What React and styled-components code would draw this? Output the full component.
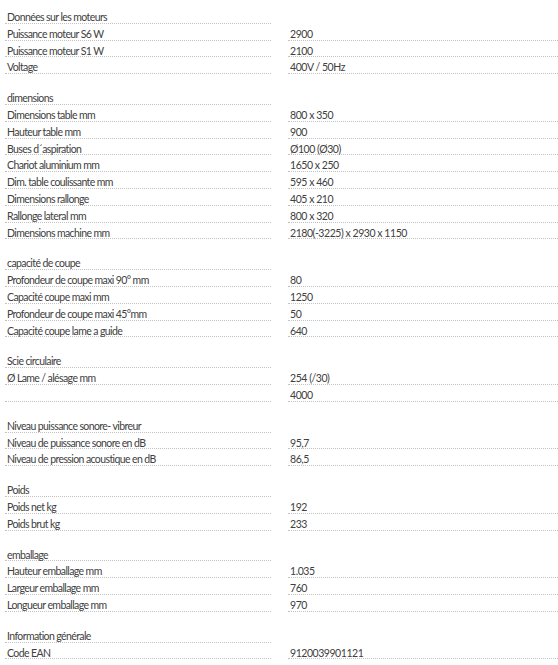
import React from "react";
import styled, { createGlobalStyle } from "styled-components";

const GlobalStyle = createGlobalStyle`
  html, body {
    margin: 0;
    padding: 0;
    background: #ffffff;
    overflow: hidden;
  }
`;

const Page = styled.div`
  width: 558px;
  padding: 7px 0 0 5px;
  box-sizing: border-box;
  font-family: "Lato", "Liberation Sans", sans-serif;
  font-size: 10.5px;
  letter-spacing: -0.45px;
  color: #404040;
`;

const Section = styled.div`
  & + & {
    margin-top: 14px;
  }
`;

const Row = styled.div`
  display: grid;
  grid-template-columns: 266px 270px;
  column-gap: 17px;
`;

const Cell = styled.div`
  box-sizing: border-box;
  height: 16.8px;
  padding: 5px 0 0 2px;
  line-height: 10px;
  white-space: nowrap;
  letter-spacing: ${(p) => (p.$label ? "-0.6px" : "inherit")};
  border-bottom: ${(p) => (p.$blank ? "none" : "1px dotted #c2c2c2")};
`;

const sections = [
  {
    title: "Données sur les moteurs",
    rows: [
      ["Puissance moteur S6 W", "2900"],
      ["Puissance moteur S1 W", "2100"],
      ["Voltage", "400V / 50Hz"],
    ],
  },
  {
    title: "dimensions",
    rows: [
      ["Dimensions table mm", "800 x 350"],
      ["Hauteur table mm", "900"],
      ["Buses d´aspiration", "Ø100 (Ø30)"],
      ["Chariot aluminium mm", "1650 x 250"],
      ["Dim. table coulissante mm", "595 x 460"],
      ["Dimensions rallonge", "405 x 210"],
      ["Rallonge lateral mm", "800 x 320"],
      ["Dimensions machine mm", "2180(-3225) x 2930 x 1150"],
    ],
  },
  {
    title: "capacité de coupe",
    rows: [
      ["Profondeur de coupe maxi 90° mm", "80"],
      ["Capacité coupe maxi mm", "1250"],
      ["Profondeur de coupe maxi 45°mm", "50"],
      ["Capacité coupe lame a guide", "640"],
    ],
  },
  {
    title: "Scie circulaire",
    rows: [
      ["Ø Lame / alésage mm", "254 (/30)"],
      ["", "4000"],
    ],
  },
  {
    title: "Niveau puissance sonore- vibreur",
    rows: [
      ["Niveau de puissance sonore en dB", "95,7"],
      ["Niveau de pression acoustique en dB", "86,5"],
    ],
  },
  {
    title: "Poids",
    rows: [
      ["Poids net kg", "192"],
      ["Poids brut kg", "233"],
    ],
  },
  {
    title: "emballage",
    rows: [
      ["Hauteur emballage mm", "1.035"],
      ["Largeur emballage mm", "760"],
      ["Longueur emballage mm", "970"],
    ],
  },
  {
    title: "Information générale",
    rows: [["Code EAN", "9120039901121"]],
  },
];

export default function App() {
  return (
    <>
      <GlobalStyle />
      <Page>
        {sections.map((s) => (
          <Section key={s.title}>
            <Row>
              <Cell $label>{s.title}</Cell>
              <Cell $blank />
            </Row>
            {s.rows.map(([label, value], i) => (
              <Row key={i}>
                <Cell $label>{label}</Cell>
                <Cell>{value}</Cell>
              </Row>
            ))}
          </Section>
        ))}
      </Page>
    </>
  );
}
